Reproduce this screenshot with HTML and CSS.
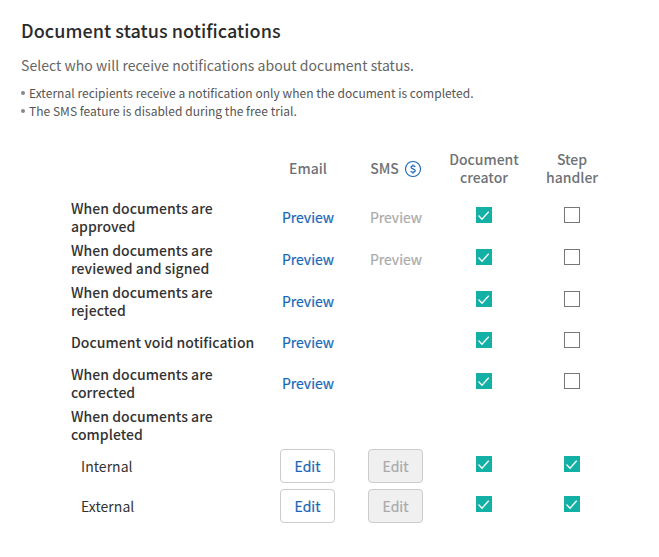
FILE: index.html
```html
<!DOCTYPE html>
<html lang="en">
<head>
<meta charset="utf-8">
<title>Document status notifications</title>
<link rel="stylesheet" href="styles.css">
</head>
<body>
<main>
  <h1>Document status notifications</h1>
  <p class="lead">Select who will receive notifications about document status.</p>
  <ul class="notes">
    <li>External recipients receive a notification only when the document is completed.</li>
    <li>The SMS feature is disabled during the free trial.</li>
  </ul>
  <div class="table">
    <div class="row head">
      <span></span>
      <span>Email</span>
      <span class="sms">SMS <svg width="18" height="18" viewBox="0 0 18 18" fill="none" stroke="#1768b8"><circle cx="9" cy="9" r="7.5" stroke-width="1.1"/><path d="M11.2 6.9C10.8 6.2 10 5.9 9 5.9c-1.2 0-2 .5-2 1.4 0 2 4.2 1.1 4.2 3.3 0 1-.9 1.6-2.2 1.6-1.1 0-1.9-.4-2.3-1.2M9 4.4v1.5M9 12.2v1.5" stroke-width="1.2"/></svg></span>
      <span>Document<br>creator</span>
      <span>Step<br>handler</span>
    </div>
    <div class="row">
      <span class="label">When documents are approved</span>
      <a class="link">Preview</a><span class="link off">Preview</span>
      <input type="checkbox" checked><input type="checkbox">
    </div>
    <div class="row">
      <span class="label">When documents are reviewed and signed</span>
      <a class="link">Preview</a><span class="link off">Preview</span>
      <input type="checkbox" checked><input type="checkbox">
    </div>
    <div class="row">
      <span class="label">When documents are rejected</span>
      <a class="link">Preview</a><span></span>
      <input type="checkbox" checked><input type="checkbox">
    </div>
    <div class="row short">
      <span class="label">Document void notification</span>
      <a class="link">Preview</a><span></span>
      <input type="checkbox" checked><input type="checkbox">
    </div>
    <div class="row">
      <span class="label">When documents are corrected</span>
      <a class="link">Preview</a><span></span>
      <input type="checkbox" checked><input type="checkbox">
    </div>
    <div class="row">
      <span class="label">When documents are completed</span>
    </div>
    <div class="row sub">
      <span class="label">Internal</span>
      <button>Edit</button><button disabled>Edit</button>
      <input type="checkbox" checked><input type="checkbox" checked>
    </div>
    <div class="row sub">
      <span class="label">External</span>
      <button>Edit</button><button disabled>Edit</button>
      <input type="checkbox" checked><input type="checkbox" checked>
    </div>
  </div>
</main>
</body>
</html>
```
FILE: styles.css
```css
* { box-sizing: border-box; }
body {
  margin: 0;
  background: #fff;
  color: #333;
  font-family: "Noto Sans CJK KR", "Noto Sans", sans-serif;
}
main { padding: 17px 21px; }
h1 { margin: 0; font-size: 18px; line-height: 26px; font-weight: 500; letter-spacing: .07px; color: #2b2b2b; }
.lead { margin: 10px 0 0; font-size: 14px; line-height: 24px; letter-spacing: .04px; color: #666; }
.notes { margin: 7px 0 0; padding: 0; list-style: none; font-size: 12px; line-height: 18px; letter-spacing: .03px; color: #555; }
.notes li { display: flex; align-items: center; gap: 4px; }
.notes li::before { content: ""; width: 4px; height: 4px; border-radius: 50%; background: #888; }
.table { margin: 27px 0 0 50px; }
.row {
  display: grid;
  grid-template-columns: 193px repeat(4, 88px);
  align-items: center;
  justify-items: center;
  height: 42px;
  font-size: 14px;
  line-height: 18px;
}
.row.head { height: 49px; padding-bottom: 7px; text-align: center; font-weight: 500; color: #6e7276; }
.row.short { height: 40px; }
.row.sub { height: 40px; }
.label { justify-self: start; max-width: 188px; font-weight: 500; letter-spacing: .04px; }
.sub .label { padding-left: 10px; font-weight: 400; }
.sms { display: flex; align-items: center; gap: 5px; }
.sms svg { margin-top: 1px; }
.link { font-weight: 400; color: #1768b8; -webkit-text-stroke: .2px currentColor; }
.link.off { color: #aaa; }
input {
  appearance: none;
  width: 16px;
  height: 16px;
  margin: 0 0 4px;
  border: 1px solid #777;
  background: #fff;
}
.sub input { margin-bottom: 4px; }
input:checked {
  border: 0;
  background: #13b0a5 url("data:image/svg+xml,%3Csvg xmlns='http://www.w3.org/2000/svg' viewBox='0 0 16 16'%3E%3Cpath d='M2.5 8.5l3.5 3.7 6.7-7.5' fill='none' stroke='white' stroke-width='1.3'/%3E%3C/svg%3E");
}
button {
  width: 55px;
  height: 34px;
  margin-right: 1px;
  padding: 0;
  border: 1px solid #ccc;
  border-radius: 4px;
  background: #fff;
  color: #1768b8;
  font: 400 14px/18px "Noto Sans CJK KR", "Noto Sans", sans-serif;
  -webkit-text-stroke: .2px currentColor;
}
button:disabled { background: #f0f0f0; color: #aaa; }
```
